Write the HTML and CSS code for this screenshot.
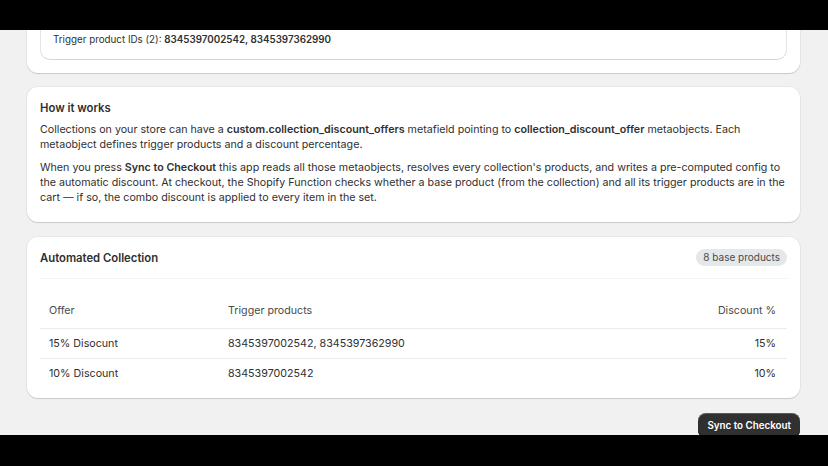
FILE: index.html
```html
<!DOCTYPE html>
<html lang="en">

<head>
    <meta charset="UTF-8">
    <title>Collection Combo Discounts</title>
    <link rel="stylesheet" href="styles.css">
</head>

<body>
    <div class="screen">
        <div class="letterbox"></div>

        <div class="viewport">
            <div class="page">
                <div class="card">
                    <div class="offer-box">
                        <p class="offer-line">Trigger product IDs (2): <strong>8345397002542, 8345397362990</strong></p>
                    </div>
                </div>

                <div class="card card-text">
                    <h2 class="card-title">How it works</h2>
                    <p>Collections on your store can have a <strong>custom.collection_discount_offers</strong> metafield pointing to <strong>collection_discount_offer</strong> metaobjects. Each metaobject defines trigger products and a discount percentage.</p>
                    <p>When you press <strong>Sync to Checkout</strong> this app reads all those metaobjects, resolves every collection's products, and writes a pre-computed config to the automatic discount. At checkout, the Shopify Function checks whether a base product (from the collection) and all its trigger products are in the cart — if so, the combo discount is applied to every item in the set.</p>
                </div>

                <div class="card card-table">
                    <div class="card-header">
                        <h2 class="card-title">Automated Collection</h2>
                        <span class="badge">8 base products</span>
                    </div>
                    <table class="offer-table">
                        <thead>
                            <tr>
                                <th class="col-offer">Offer</th>
                                <th>Trigger products</th>
                                <th class="num">Discount %</th>
                            </tr>
                        </thead>
                        <tbody>
                            <tr>
                                <td>15% Disocunt</td>
                                <td>8345397002542, 8345397362990</td>
                                <td class="num">15%</td>
                            </tr>
                            <tr>
                                <td>10% Discount</td>
                                <td>8345397002542</td>
                                <td class="num">10%</td>
                            </tr>
                        </tbody>
                    </table>
                </div>

                <div class="page-actions">
                    <button class="primary-button">Sync to Checkout</button>
                </div>
            </div>
        </div>

        <div class="letterbox letterbox-bottom"></div>
    </div>
</body>

</html>
```

FILE: styles.css
```css
:root {
    --text-color: #303030;
    --muted-color: #4a4a4a;
    --page-bg: #f1f1f1;
    --divider: #ebebeb;
}

body {
    margin: 0;
    font-family: 'Inter', 'Liberation Sans', sans-serif;
    font-size: 10.7px;
    color: var(--text-color);
    background-color: #000;
}

.screen {
    display: flex;
    flex-direction: column;
    height: 466px;
}

.letterbox {
    height: 30px;
    background-color: #000;
    flex-shrink: 0;
}

.letterbox-bottom {
    height: 31px;
}

.viewport {
    flex: 1;
    overflow: hidden;
    background-color: var(--page-bg);
}

.page {
    margin-top: -24px;
    padding: 0 28px 0 27px;
    display: flex;
    flex-direction: column;
    gap: 14px;
}

.card {
    background-color: white;
    border-radius: 11px;
    box-shadow: 0 1px 1px rgba(0, 0, 0, 0.13), 0 0 0 1px rgba(0, 0, 0, 0.04);
    padding: 13px;
}

.offer-box {
    border: 1px solid #e3e3e3;
    border-bottom-color: #d6d6d6;
    border-radius: 10px;
    padding: 12px 12px 11px;
}

.offer-line {
    margin: 0;
    font-size: 9.8px;
    line-height: 16px;
}

.card-title {
    margin: 0;
    font-size: 11.3px;
    font-weight: 600;
    line-height: 16px;
}

.card-text {
    padding-bottom: 17px;
}

.card-text .card-title {
    margin-bottom: 6px;
}

.card-text p {
    margin: 0 0 8px;
    line-height: 15px;
}

.card-text p:last-child {
    margin-bottom: 0;
}

strong {
    font-weight: 600;
}

.card-table {
    padding-top: 12px;
    padding-bottom: 10px;
    margin-top: 1px;
}

.card-header {
    display: flex;
    justify-content: space-between;
    align-items: center;
    padding-bottom: 12px;
    border-bottom: 1px solid #f3f3f3;
}

.badge {
    background-color: #e4e8eb;
    border-radius: 10px;
    padding: 0 7px;
    font-size: 10px;
    line-height: 17px;
    color: #4a4a4a;
}

.offer-table {
    width: 100%;
    border-collapse: collapse;
    margin-top: 17px;
}

.offer-table th,
.offer-table td {
    text-align: left;
    font-weight: 400;
    padding: 7px 10px 7px 9px;
    line-height: 15px;
}

.offer-table th {
    padding-bottom: 10px;
    color: var(--muted-color);
}

.offer-table tr {
    border-bottom: 1px solid var(--divider);
}

.offer-table tbody tr:last-child {
    border-bottom: none;
}

.col-offer {
    width: 160px;
}

.offer-table .num {
    text-align: right;
    padding-right: 11px;
}

.page-actions {
    display: flex;
    justify-content: flex-end;
    margin-top: 1px;
}

.primary-button {
    background-color: #303030;
    color: white;
    border: none;
    border-radius: 8px;
    padding: 0 9px;
    height: 25px;
    font-family: inherit;
    font-size: 9.8px;
    font-weight: 600;
    box-shadow: inset 0 -1px 0 #000, inset 0 1px 0 rgba(255, 255, 255, 0.2);
    cursor: pointer;
}
```
